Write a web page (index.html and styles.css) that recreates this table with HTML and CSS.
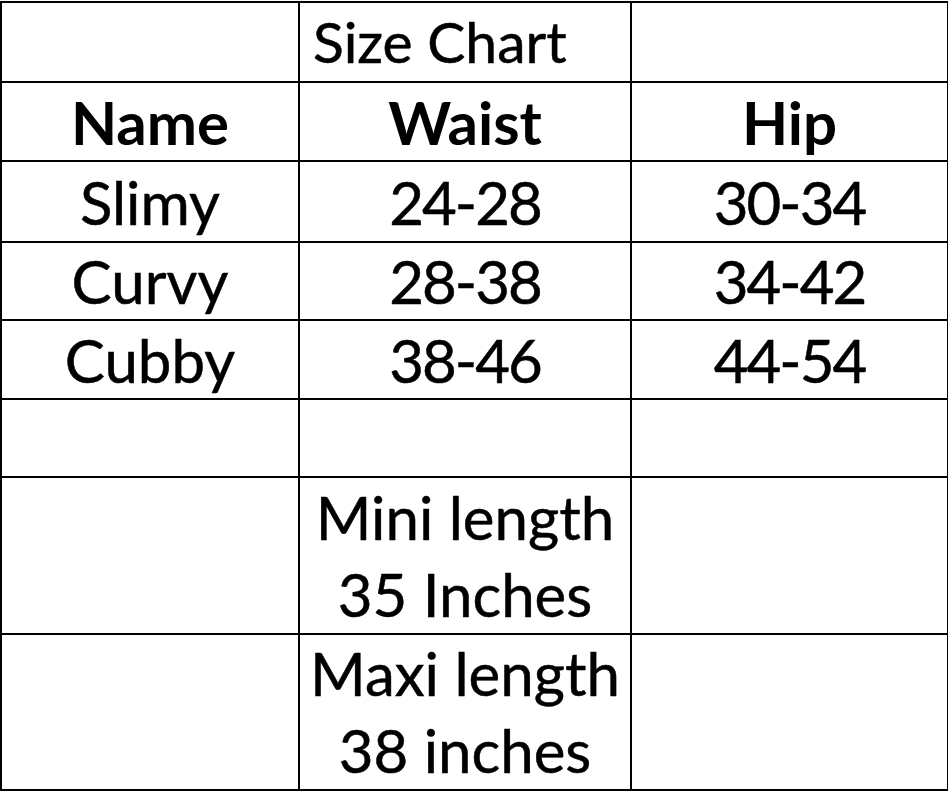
FILE: index.html
```html
<!DOCTYPE html>
<html>
<head>
<meta charset="utf-8">
<link rel="stylesheet" href="styles.css">
</head>
<body>
<table class="chart">
  <colgroup>
    <col class="c1">
    <col class="c2">
    <col class="c3">
  </colgroup>
  <tr class="r-title"><td></td><td class="title">Size Chart</td><td></td></tr>
  <tr class="r-single head"><td>Name</td><td>Waist</td><td>Hip</td></tr>
  <tr class="r-single r-a"><td>Slimy</td><td class="num">24-28</td><td class="num">30-34</td></tr>
  <tr class="r-single r-b"><td>Curvy</td><td class="num">28-38</td><td class="num">34-42</td></tr>
  <tr class="r-single r-c"><td>Cubby</td><td class="num">38-46</td><td class="num">44-54</td></tr>
  <tr class="r-single r-empty"><td></td><td></td><td></td></tr>
  <tr class="r-double"><td></td><td>Mini length<br>35 Inches</td><td></td></tr>
  <tr class="r-double r-last"><td></td><td>Maxi length<br>38 inches</td><td></td></tr>
</table>
</body>
</html>
```

FILE: styles.css
```css
html, body {
  margin: 0;
  padding: 0;
  background: #fff;
}
body {
  padding-top: 1px;
}
.chart {
  border-collapse: collapse;
  table-layout: fixed;
  width: 947px;
  font-family: Lato, "Liberation Sans", sans-serif;
  color: #000;
}
.c1 { width: 298px; }
.c2 { width: 332px; }
.c3 { width: 317px; }
.chart td {
  border: 2px solid #000;
  padding: 0;
  text-align: center;
  vertical-align: middle;
  font-size: 60px;
  line-height: 60px;
  white-space: nowrap;
  -webkit-text-stroke: 0.5px #000;
}
.chart td.num {
  letter-spacing: -2px;
}
.r-title td { height: 78px; }
.chart td.title {
  text-align: left;
  padding-left: 13px;
  font-size: 57px;
  vertical-align: top;
  padding-top: 8px;
  height: 70px;
}
.head td { font-weight: 700; height: 77px; -webkit-text-stroke: 0; }
.r-a td { height: 79px; }
.r-b td { height: 76px; }
.r-c td { height: 77px; }
.r-empty td { height: 76px; }
.r-double td { height: 155px; line-height: 77px; }
.r-last td { height: 154px; }
```
